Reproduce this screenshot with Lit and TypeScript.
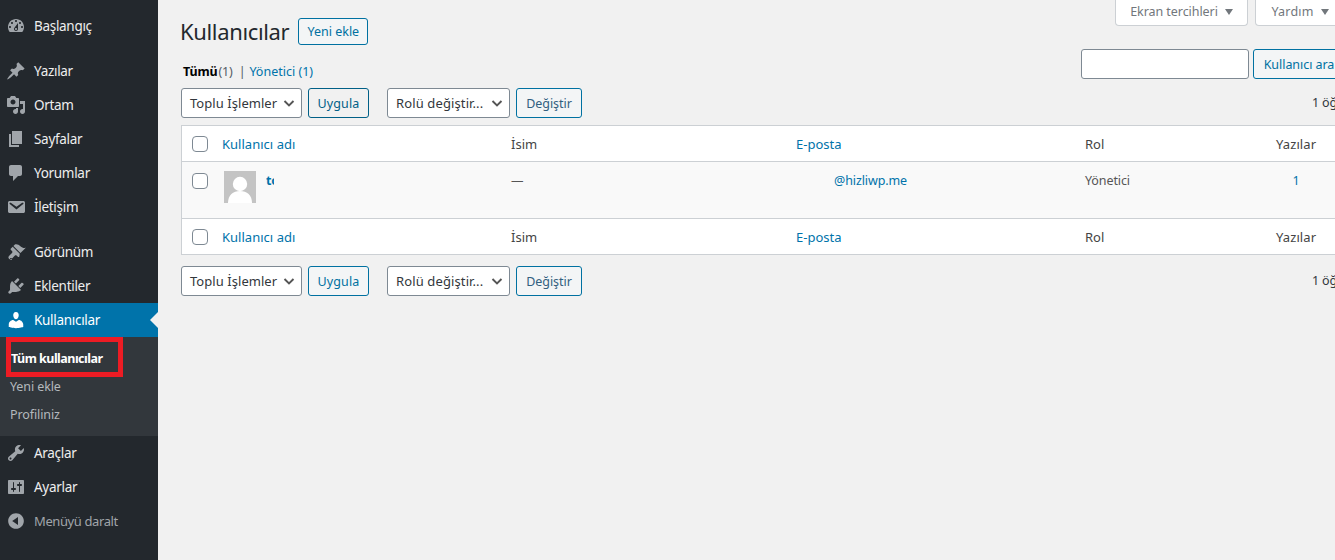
import { LitElement, html, css, svg } from "lit";
import { customElement } from "lit/decorators.js";

const P: Record<string, string> = {
  dashboard: "M3.76 16h12.48c1.1-1.37 1.76-3.11 1.76-5 0-4.42-3.58-8-8-8s-8 3.58-8 8c0 1.89.66 3.63 1.76 5zM10 4c.55 0 1 .45 1 1s-.45 1-1 1-1-.45-1-1 .45-1 1-1zM6 6c.55 0 1 .45 1 1s-.45 1-1 1-1-.45-1-1 .45-1 1-1zm8 0c.55 0 1 .45 1 1s-.45 1-1 1-1-.45-1-1 .45-1 1-1zm-5.37 5.55L12 7v6c0 1.1-.9 2-2 2s-2-.9-2-2c0-.57.24-1.08.63-1.45zM4 10c.55 0 1 .45 1 1s-.45 1-1 1-1-.45-1-1 .45-1 1-1zm12 0c.55 0 1 .45 1 1s-.45 1-1 1-1-.45-1-1 .45-1 1-1zm-5 3c0-.55-.45-1-1-1s-1 .45-1 1 .45 1 1 1 1-.45 1-1z",
  post: "M10.44 3.02l1.82-1.82 6.36 6.35-1.83 1.82c-1.05-.68-2.48-.57-3.41.36l-.75.75c-.92.93-1.04 2.35-.35 3.41l-1.83 1.82-2.41-2.41-2.8 2.79c-.42.42-3.38 2.71-3.8 2.29s1.86-3.39 2.28-3.81l2.79-2.79L4.1 9.36l1.83-1.82c1.05.69 2.48.57 3.4-.36l.75-.75c.93-.92 1.05-2.35.36-3.41z",
  media: "M13 11V4c0-.55-.45-1-1-1h-1.67L9 1H5L3.67 3H2c-.55 0-1 .45-1 1v7c0 .55.45 1 1 1h10c.55 0 1-.45 1-1zM7 4.5c1.38 0 2.5 1.12 2.5 2.5S8.38 9.5 7 9.5 4.5 8.38 4.5 7 5.62 4.5 7 4.5zM14 6h5v10.5c0 1.38-1.12 2.5-2.5 2.5S14 17.88 14 16.5s1.12-2.5 2.5-2.5c.17 0 .34.02.5.05V9h-3V6zm-4 8.05V13h2v3.5c0 1.38-1.12 2.5-2.5 2.5S7 17.88 7 16.5 8.12 14 9.5 14c.17 0 .34.02.5.05z",
  page: "M6 15V2h10v13H6zm-1 1h8v2H3V5h2v11z",
  comments: "M5 2h9c1.1 0 2 .9 2 2v7c0 1.1-.9 2-2 2h-2l-5 5v-5H5c-1.1 0-2-.9-2-2V4c0-1.1.9-2 2-2z",
  email: "M3.87 4h13.25C18.37 4 19 4.59 19 5.79v8.42c0 1.19-.63 1.79-1.88 1.79H3.87c-1.25 0-1.88-.6-1.88-1.79V5.79c0-1.2.63-1.79 1.88-1.79zm6.62 8.6l6.74-5.53c.24-.2.43-.66.13-1.07-.29-.41-.82-.42-1.17-.17l-5.7 3.86L4.8 5.83c-.35-.25-.88-.24-1.17.17-.3.41-.11.87.13 1.07z",
  appearance: "M14.48 11.06L7.41 3.99l1.5-1.5c.5-.56 2.3-.47 3.51.32 1.21.8 1.43 1.28 2.91 2.1 1.18.64 2.45 1.26 4.45.85zm-.71.71L6.7 4.7 4.93 6.47c-.39.39-.39 1.02 0 1.41l1.06 1.06c.59.59.59 1.54 0 2.12l-3 2.83c-.79.79-.79 2.07 0 2.86.79.79 2.07.79 2.86 0l2.83-3c.58-.59 1.53-.59 2.12 0l1.06 1.06c.39.39 1.02.39 1.41 0zM5 16c.55 0 1 .45 1 1s-.45 1-1 1-1-.45-1-1 .45-1 1-1z",
  plugins: "M13.11 4.36L9.87 7.6 8 5.73l3.24-3.24c.35-.34 1.05-.2 1.56.32.52.51.66 1.21.31 1.55zm-8 1.77l.91-1.12 9.01 9.01-1.19.84c-.71.71-2.63 1.16-3.82 1.16H6.14L4.9 17.26c-.59.59-1.54.59-2.12 0-.59-.58-.59-1.53 0-2.12l1.24-1.24v-3.88c0-1.13.4-3.19 1.09-3.89zm7.26 3.97l3.24-3.24c.34-.35 1.04-.21 1.55.31.52.51.66 1.21.31 1.55l-3.24 3.25z",
  users: "M10 9.25c-2.27 0-2.73-3.44-2.73-3.44C7 4.02 7.82 2 9.97 2c2.16 0 2.98 2.02 2.71 3.81 0 0-.41 3.44-2.68 3.44zm0 2.57L12.72 10c2.39 0 4.52 2.33 4.52 4.53v2.49s-3.65 1.13-7.24 1.13c-3.65 0-7.24-1.13-7.24-1.13v-2.49c0-2.25 1.94-4.48 4.47-4.48z",
  tools: "M16.68 9.77c-1.34 1.34-3.3 1.67-4.95.99l-5.41 6.52c-.99.99-2.59.99-3.58 0s-.99-2.59 0-3.57l6.52-5.42c-.68-1.65-.35-3.61.99-4.95 1.28-1.28 3.12-1.62 4.72-1.06l-2.89 2.89 2.82 2.82 2.86-2.87c.53 1.58.18 3.39-1.08 4.65zM3.81 16.21c.4.39 1.04.39 1.43 0 .4-.4.4-1.04 0-1.43-.39-.4-1.03-.4-1.43 0-.39.39-.39 1.03 0 1.43z",
  settings: "M18 16V4c0-.55-.45-1-1-1H3c-.55 0-1 .45-1 1v12c0 .55.45 1 1 1h14c.55 0 1-.45 1-1zM8 11h1c.55 0 1 .45 1 1s-.45 1-1 1H8v1.5c0 .28-.22.5-.5.5s-.5-.22-.5-.5V13H6c-.55 0-1-.45-1-1s.45-1 1-1h1V5.5c0-.28.22-.5.5-.5s.5.22.5.5V11zm5-2h-1c-.55 0-1-.45-1-1s.45-1 1-1h1V5.5c0-.28.22-.5.5-.5s.5.22.5.5V7h1c.55 0 1 .45 1 1s-.45 1-1 1h-1v5.5c0 .28-.22.5-.5.5s-.5-.22-.5-.5V9z",
  collapse: "M10 2.16c4.33 0 7.84 3.51 7.84 7.84s-3.51 7.84-7.84 7.84S2.16 14.33 2.16 10 5.71 2.16 10 2.16zm2 11.72V6.12L6.18 9.97z",
};

const icon = (k: string) => html`<svg class="ic" viewBox="0 0 20 20" width="20" height="20">${svg`<path fill="currentColor" d=${P[k]}></path>`}</svg>`;
const chev = html`<svg class="chev" viewBox="0 0 16 16" width="16" height="16"><path d="M3.5 6 L8 10.5 L12.5 6" fill="none" stroke="#555" stroke-width="1.9"></path></svg>`;

@customElement("app-root")
export class AppRoot extends LitElement {
  static styles = css`
    :host { display: block; width: 1335px; height: 560px; overflow: hidden; background: #f1f1f1;
      font-family: "Noto Sans", "Open Sans", sans-serif; font-size: 12.5px; color: #444; line-height: 1.4; letter-spacing: -.15px; }
    .shell { display: flex; align-items: stretch; height: 560px; }
    .side { flex: 0 0 158px; background: #23282d; padding-top: 9px; position: relative; box-sizing: border-box; }
    .mi { height: 34px; display: flex; align-items: center; color: #eee; font-size: 13.5px; padding-left: 6px; gap: 8px; position: relative; letter-spacing: -.3px; }
    .mi .ic { color: #a0a5aa; flex: none; }
    .gap { height: 11px; }
    .mi.cur { background: #0073aa; color: #fff; }
    .mi.cur .ic { color: #fff; }
    .mi.dim { color: #a0a5aa; font-size: 13px; letter-spacing: -.4px; }
    .arrow { position: absolute; right: 0; top: 9px; border: 8px solid transparent; border-left-width: 0; border-right-color: #f1f1f1; }
    .sub { background: #32373c; height: 99px; padding-top: 8px; box-sizing: border-box; position: relative; }
    .sub div { height: 28px; line-height: 28px; padding-left: 10px; font-size: 12.5px; color: #b4b9be; letter-spacing: -.1px; }
    .sub .on { color: #fff; font-weight: 700; padding-left: 11px; letter-spacing: -.52px; }
    .mark { position: absolute; left: 6px; top: 0; width: 117px; height: 40px; box-sizing: border-box; border: 5px solid #ed1c24; }
    .main { flex: 0 0 1187px; box-sizing: border-box; padding-left: 23px; }
    .tabs { display: flex; justify-content: flex-end; gap: 7px; margin-top: -1px; height: 27px; }
    .tab { background: #fff; border: 1px solid #ccd0d4; border-top: 0; border-radius: 0 0 4px 4px; box-sizing: border-box; height: 27px; display: flex; align-items: center; justify-content: center; gap: 7px; color: #72777c; letter-spacing: 0; }
    .tab.a { width: 133px; letter-spacing: -.06px; }
    .tab.b { width: 90px; letter-spacing: .2px; }
    .tab i { border: 4px solid transparent; border-top: 6px solid #72777c; border-bottom: 0; }
    .head { display: flex; align-items: center; gap: 9px; height: 27px; margin-top: -8px; margin-left: -1px; }
    .head h1 { margin: 0; font-size: 22px; font-weight: 400; color: #23282d; letter-spacing: -.35px; }
    .btn { box-sizing: border-box; display: inline-flex; align-items: center; justify-content: center; height: 30px; padding-top: 1px; background: #f3f5f6; border: 1px solid #0071a1; border-radius: 3px; color: #0071a1; white-space: nowrap; letter-spacing: -.05px; }
    .btn.small { height: 27px; width: 70px; padding-top: 0; letter-spacing: 0; }
    .btn.focus { background: #f1f1f1; border-color: #016087; color: #016087; }
    .btn.muted { color: #32607f; }
    .u { width: 61px; letter-spacing: .1px; }
    .d { width: 66px; }
    .srow { display: flex; justify-content: space-between; margin-top: 4px; height: 30px; padding-left: 2px; }
    .subsub { margin-top: 14px; color: #555d66; display: flex; }
    .subsub b { color: #000; font-weight: 700; margin-right: 1px; }
    .subsub a { color: #0073aa; letter-spacing: 0; }
    .sep { margin: 0 4px 0 6px; }
    .search { display: flex; gap: 4px; }
    .inp { box-sizing: border-box; width: 168px; height: 30px; background: #fff; border: 1px solid #7e8993; border-radius: 3px; }
    .btn.s { width: 92px; }
    .nav { display: flex; align-items: center; height: 30px; color: #32373c; }
    .nav.top { margin-top: 9px; margin-bottom: 7px; }
    .nav.bot { margin-top: 11px; }
    .sel { box-sizing: border-box; height: 30px; background: #fff; border: 1px solid #7e8993; border-radius: 3px; display: flex; align-items: center; justify-content: space-between; padding: 0 4px 0 8px; color: #32373c; white-space: nowrap; font-size: 13px; letter-spacing: .05px; }
    .sel.x { width: 121px; margin-right: 6px; }
    .sel.y { width: 123px; margin-left: 18px; margin-right: 6px; letter-spacing: .12px; }
    .count { margin-left: auto; width: 33px; white-space: nowrap; }
    table { border-collapse: separate; border-spacing: 0; table-layout: fixed; width: 1164px; background: #fff; border: 1px solid #ccd0d4; border-right: 0; }
    th, td { text-align: left; font-weight: 400; padding: 0 0 0 8px; box-sizing: border-box; vertical-align: top; color: #444; font-size: 13px; letter-spacing: .02px; }
    thead th { height: 36px; vertical-align: middle; padding-top: 1px; border-bottom: 1px solid #ccd0d4; }
    tfoot th { height: 36px; vertical-align: middle; padding-top: 1px; border-top: 1px solid #ccd0d4; }
    tbody td { height: 56px; background: #f9f9f9; padding-top: 9px; line-height: 20px; font-size: 12.5px; color: #555; letter-spacing: -.1px; }
    .c0 { width: 32px; }
    .c1 { width: 289px; }
    .c2 { width: 285px; }
    .c3 { width: 289px; }
    .c4 { width: 191px; }
    a { color: #0073aa; text-decoration: none; }
    .chk { appearance: none; display: block; margin: 0 0 0 10px; width: 16px; height: 16px; background: #fff; border: 1px solid #7e8993; border-radius: 4px; box-sizing: border-box; }
    th.cb, td.cb { padding: 0; vertical-align: middle; }
    tbody td.cb { vertical-align: top; padding-top: 11px; }
    .user { display: flex; gap: 10px; padding-left: 2px; }
    .av { width: 32px; height: 32px; flex: none; }
    .nm { display: block; width: 8px; overflow: hidden; font-weight: 700; color: #0073aa; }
    .em { padding-left: 46px; }
    th.num { text-align: center; padding: 1px 29px 0 8px; letter-spacing: .1px; }
    tbody td.num { text-align: center; padding: 9px 29px 0 8px; color: #0073aa; }
  `;

  nav(cls: string, focus: boolean) {
    return html`<div class="nav ${cls}">
      <div class="sel x">Toplu İşlemler ${chev}</div>
      <span class="btn u ${focus ? "focus" : ""}">Uygula</span>
      <div class="sel y">Rolü değiştir... ${chev}</div>
      <span class="btn d muted">Değiştir</span>
      <span class="count">1 öğe</span>
    </div>`;
  }

  row() {
    return html`<tr>
      <th class="cb"><input class="chk" type="checkbox" /></th>
      <th><a href="#">Kullanıcı adı</a></th>
      <th>İsim</th>
      <th><a href="#">E-posta</a></th>
      <th>Rol</th>
      <th class="num">Yazılar</th>
    </tr>`;
  }

  render() {
    const item = (k: string, t: string) => html`<div class="mi">${icon(k)}<span>${t}</span></div>`;
    return html`<div class="shell">
      <nav class="side">
        ${item("dashboard", "Başlangıç")}
        <div class="gap"></div>
        ${item("post", "Yazılar")}
        ${item("media", "Ortam")}
        ${item("page", "Sayfalar")}
        ${item("comments", "Yorumlar")}
        ${item("email", "İletişim")}
        <div class="gap"></div>
        ${item("appearance", "Görünüm")}
        ${item("plugins", "Eklentiler")}
        <div class="mi cur">${icon("users")}<span>Kullanıcılar</span><i class="arrow"></i></div>
        <div class="sub">
          <div class="on">Tüm kullanıcılar</div>
          <div>Yeni ekle</div>
          <div>Profiliniz</div>
          <span class="mark"></span>
        </div>
        ${item("tools", "Araçlar")}
        ${item("settings", "Ayarlar")}
        <div class="mi dim">${icon("collapse")}<span>Menüyü daralt</span></div>
      </nav>
      <main class="main">
        <div class="tabs">
          <div class="tab a">Ekran tercihleri <i></i></div>
          <div class="tab b">Yardım <i></i></div>
        </div>
        <div class="head"><h1>Kullanıcılar</h1><span class="btn small">Yeni ekle</span></div>
        <div class="srow">
          <div class="subsub"><b>Tümü</b><span>(1)</span><span class="sep">|</span><a href="#">Yönetici (1)</a></div>
          <div class="search"><div class="inp"></div><span class="btn s">Kullanıcı ara</span></div>
        </div>
        ${this.nav("top", true)}
        <table>
          <colgroup><col class="c0" /><col class="c1" /><col class="c2" /><col class="c3" /><col class="c4" /><col /></colgroup>
          <thead>${this.row()}</thead>
          <tbody>
            <tr>
              <td class="cb"><input class="chk" type="checkbox" /></td>
              <td><div class="user">
                <svg class="av" viewBox="0 0 32 32"><rect width="32" height="32" fill="#c4c4c4"></rect><circle cx="16" cy="13" r="7.2" fill="#fff"></circle><path d="M4 32c0-8 5-12 12-12s12 4 12 12z" fill="#fff"></path></svg>
                <a class="nm" href="#">to</a>
              </div></td>
              <td>—</td>
              <td class="em"><a href="#">@hizliwp.me</a></td>
              <td>Yönetici</td>
              <td class="num">1</td>
            </tr>
          </tbody>
          <tfoot>${this.row()}</tfoot>
        </table>
        ${this.nav("bot", false)}
      </main>
    </div>`;
  }
}
